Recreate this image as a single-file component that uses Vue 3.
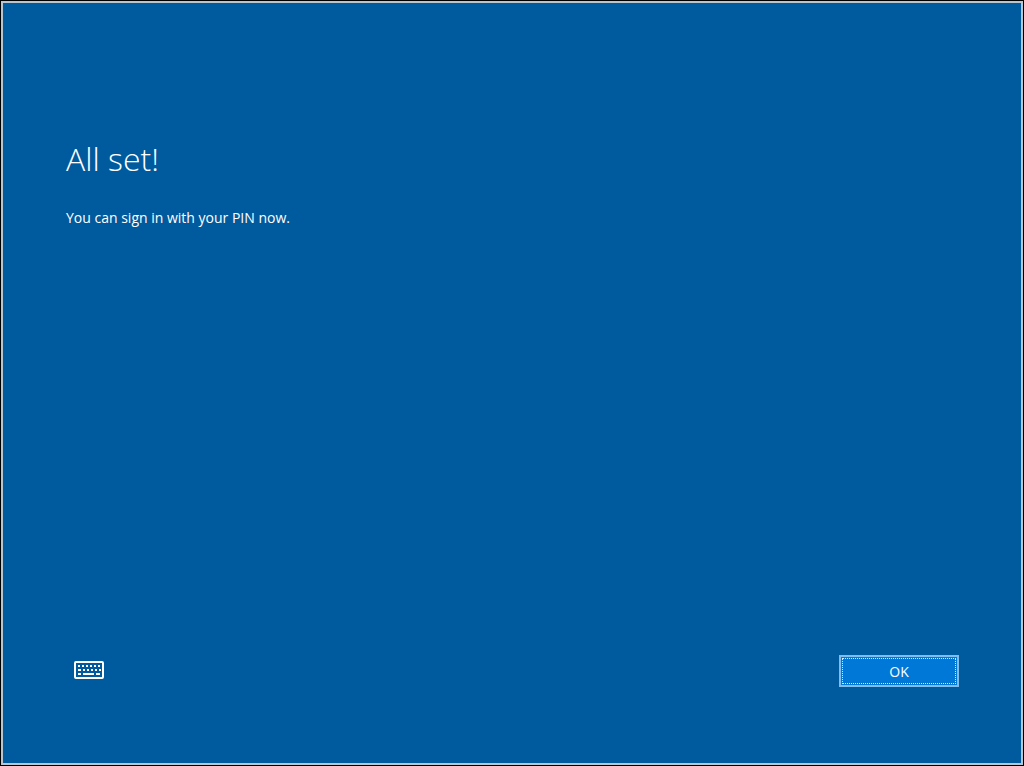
<template>
  <main class="screen">
    <section class="message">
      <h1>All set!</h1>
      <p>You can sign in with your PIN now.</p>
    </section>

    <footer class="actions">
      <button type="button" class="btn-keyboard" aria-label="Keyboard">
        <svg width="30" height="20" viewBox="0 0 30 20" fill="none">
          <rect x="1" y="1" width="28" height="16" rx="1" stroke="#fff" stroke-width="2" />
          <path
            d="M4 5h2M8 5h2M12 5h2M16 5h2M20 5h2M24 5h2M4 9h3M9 9h2M13 9h2M17 9h2M21 9h2M25 9h2M4 13h3M9 13h11M22 13h4"
            stroke="#fff"
            stroke-width="2"
          />
        </svg>
      </button>

      <button type="button" class="btn-ok">
        <span>OK</span>
      </button>
    </footer>
  </main>
</template>

<script setup>
</script>

<style>
body {
  margin: 0;
  background-color: #000;
}
</style>

<style scoped>
.screen {
  box-sizing: border-box;
  display: flex;
  flex-direction: column;
  justify-content: space-between;
  min-height: calc(100vh - 2px);
  margin: 1px;
  padding: 136px 62px 76px 63px;
  border: 2px solid #b9c6d2;
  background-color: #005a9e;
  color: #fff;
  font-family: "Open Sans", "Noto Sans", sans-serif;
}

.message h1 {
  margin: 0;
  font-size: 32px;
  font-weight: 300;
  line-height: 40px;
}

.message p {
  margin: 28px 0 0;
  font-size: 14px;
  line-height: 22px;
}

.actions {
  display: flex;
  justify-content: space-between;
  align-items: center;
}

button {
  margin: 0;
  color: inherit;
  font-family: inherit;
  cursor: pointer;
}

/* Touch keyboard toggle */
.btn-keyboard {
  display: flex;
  padding: 0 8px;
  border: none;
  background: none;
}

.btn-ok {
  width: 120px;
  height: 32px;
  padding: 1px;
  border: 2px solid #80bcec;
  background-color: #0078d7;
}

/* Focus rectangle */
.btn-ok span {
  box-sizing: border-box;
  display: flex;
  justify-content: center;
  align-items: center;
  height: 100%;
  border: 1px dotted #d4eafc;
  font-size: 14px;
}
</style>
